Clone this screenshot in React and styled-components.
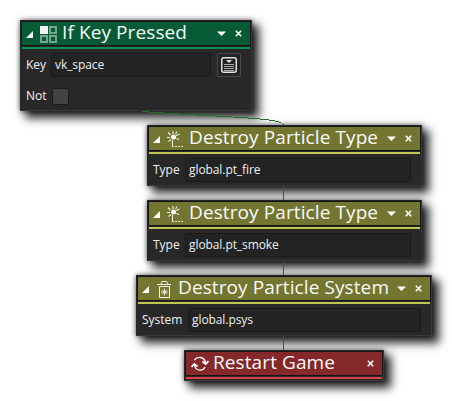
import React from "react";
import styled, { createGlobalStyle } from "styled-components";

const Global = createGlobalStyle`
  html, body { margin: 0; background: #fff; }
  * { box-sizing: border-box; }
`;

const Canvas = styled.main`
  position: relative;
  width: 452px;
  height: 401px;
  overflow: hidden;
  background: #fff;
  font-family: "Open Sans", "Noto Sans", sans-serif;
  color: #f0f0f0;
`;

const Node = styled.section`
  position: absolute;
  left: ${(p) => p.$x}px;
  top: ${(p) => p.$y}px;
  width: ${(p) => p.$w}px;
  height: ${(p) => p.$h}px;
  padding: 1px;
  background: #282828;
  border: 1px solid #383838;
  border-top-color: #262626;
  border-left-color: #262626;
  box-shadow: 6px 6px 9px 1px rgba(0, 0, 0, 0.85), 0 0 5px rgba(0, 0, 0, 0.6);
`;

const Header = styled.header`
  display: flex;
  align-items: center;
  height: 25px;
  margin: -1px -1px 0;
  border: 1px solid #151515;
  background: ${(p) => p.$color};
`;

const Stripe = styled.div`
  height: 2px;
  margin-top: 1px;
  background: ${(p) => p.$color};
`;

const Arrow = styled.svg`
  flex: none;
  width: 7px;
  height: 7px;
  margin: 2px 0 0 4px;
  fill: #fff;
`;

const Icon = styled.svg`
  flex: none;
  width: 18px;
  height: 18px;
  margin-left: ${(p) => p.$gap}px;
`;

const Title = styled.h1`
  flex: 1;
  margin: -3px 0 0 ${(p) => p.$gap}px;
  font-size: 19px;
  font-weight: 400;
  line-height: 23px;
  letter-spacing: 0.1px;
  white-space: nowrap;
  color: #fafafa;
`;

const HeaderButtons = styled.div`
  display: flex;
  align-items: center;
  gap: 9px;
  padding-right: 8px;
  svg { display: block; }
`;

const Row = styled.div`
  display: flex;
  align-items: center;
  height: 24px;
  margin-top: ${(p) => p.$top}px;
  padding: 0 9px 0 4px;
  font-size: 12px;
`;

const Label = styled.span`
  flex: none;
  width: ${(p) => p.$w}px;
  line-height: 24px;
`;

const Field = styled.div`
  flex: 1;
  height: 24px;
  padding-left: 3px;
  border: 1px solid #1a1a1a;
  border-radius: 2px;
  background: #232323;
  line-height: 22px;
  letter-spacing: -0.08px;
`;

const MenuButton = styled.div`
  display: grid;
  place-items: center;
  width: 24px;
  height: 24px;
  margin-left: 6px;
  border: 1px solid #4b4b4b;
  border-radius: 2px;
  background: #242424;
`;

const Check = styled.div`
  width: 17px;
  height: 17px;
  margin-left: 1px;
  border: 1px solid #1b1b1b;
  border-radius: 2px;
  background: #424343;
`;

const Wires = styled.svg`
  position: absolute;
  inset: 0;
  fill: none;
  stroke: #1f6f28;
  shape-rendering: crispEdges;
`;

const KeyIcon = () => (
  <Icon $gap={6} viewBox="0 0 18 18" shapeRendering="crispEdges">
    <path d="M1 1h8v8H1z" fill="#f2f2f2" />
    <path d="M11 2h6v6h-6zM2 11h6v6h-6zM11 11h6v6h-6z" fill="none" stroke="#76a58f" strokeWidth="1.5" />
  </Icon>
);

const ParticleIcon = () => (
  <Icon $gap={6} viewBox="0 0 18 18">
    <circle cx="7.5" cy="7" r="2.5" fill="#fff" />
    <path
      d="M7 1v3M1 7.5h3M10 5.5l3.5-1.5M2 2.5L4.5 5M11 1.5L9.5 4M2.5 11.5l2.5-2M10.5 8.5l2.5 1M6.5 10v6.5"
      fill="none" stroke="#f2f2e2" strokeWidth="1.1"
    />
    <path d="M6 16.5h11" stroke="#e4e4c4" strokeDasharray="2 1" />
  </Icon>
);

const TrashIcon = () => (
  <Icon $gap={6} viewBox="0 0 18 18">
    <path d="M2 4.5h14M6 4l1-2.5h4.500L13 4M4.500 6.500v11h10v-11z" fill="none" stroke="#f2f2e2" />
    <path d="M9.500 8.500v7M6 12h7M7.200 9.700l4.600 4.600M11.800 9.700l-4.600 4.600" stroke="#fff" strokeWidth=".8" />
  </Icon>
);

const RestartIcon = () => (
  <Icon $gap={5} viewBox="0 0 18 18" fill="none" stroke="#fff" strokeWidth="1.3">
    <path d="M3.500 5C6 1.500 13 1 14.500 7.500M14 12C12 16.500 4.500 16.500 3.500 10" />
    <path d="M11.500 6.500l3.200 2.500L17.500 6M.5 12L3.300 9l3.200 2.500" strokeWidth="1.7" />
  </Icon>
);

const icons = { key: KeyIcon, particle: ParticleIcon, trash: TrashIcon, restart: RestartIcon };
const themes = {
  green: ["#065a36", "#0a8f55"],
  olive: ["#737630", "#c0c552"],
  red: ["#842829", "#db4142"],
};

function ActionNode({ x, y, w, h, theme, icon, title, gap = 5, children }) {
  const [bar, stripe] = themes[theme];
  const Glyph = icons[icon];
  return (
    <Node $x={x} $y={y} $w={w} $h={h}>
      <Header $color={bar}>
        {children && <Arrow viewBox="0 0 7 7"><path d="M7 0v7H0z" /></Arrow>}
        <Glyph />
        <Title $gap={gap}>{title}</Title>
        <HeaderButtons>
          {children && (
            <svg width="9" height="5"><path d="M0 .5h9L4.5 5z" fill="#fff" /></svg>
          )}
          <svg width="7" height="7">
            <path d="M.8 .8l5.4 5.4M6.2 .8L.8 6.2" stroke="#fff" strokeWidth="1.6" />
          </svg>
        </HeaderButtons>
      </Header>
      <Stripe $color={stripe} />
      {children}
    </Node>
  );
}

export default function App() {
  return (
    <>
      <Global />
      <Canvas>
        <ActionNode x={20} y={20} w={232} h={91} theme="green" icon="key" title="If Key Pressed">
          <Row $top={4}>
            <Label $w={25}>Key</Label>
            <Field>vk_space</Field>
            <MenuButton>
              <svg width="16" height="16" viewBox="0 0 16 16" fill="none" stroke="#e2e2e2">
                <rect x=".75" y=".75" width="14.5" height="14.5" rx="2" strokeWidth="1.5" />
                <path d="M5 3h6L8 6z" fill="#e2e2e2" stroke="none" />
                <path d="M3 7.5h10M3 9.5h10M3 11.5h10M3 13.5h10" stroke="#aaa" />
              </svg>
            </MenuButton>
          </Row>
          <Row $top={7}>
            <Label $w={25}>Not</Label>
            <Check />
          </Row>
        </ActionNode>
        <ActionNode x={147} y={125} w={275} h={61} theme="olive" icon="particle" title="Destroy Particle Type">
          <Row $top={4}><Label $w={32}>Type</Label><Field>global.pt_fire</Field></Row>
        </ActionNode>
        <ActionNode x={147} y={200} w={275} h={61} theme="olive" icon="particle" title="Destroy Particle Type">
          <Row $top={4}><Label $w={32}>Type</Label><Field>global.pt_smoke</Field></Row>
        </ActionNode>
        <ActionNode x={136} y={275} w={296} h={61} theme="olive" icon="trash" title="Destroy Particle System">
          <Row $top={4}><Label $w={46}>System</Label><Field>global.psys</Field></Row>
        </ActionNode>
        <ActionNode x={184} y={350} w={200} h={31} theme="red" icon="restart" title="Restart Game" gap={4} />
        <Wires width="452" height="401">
          <path d="M142 111.5C210 117 283 117 283.5 125" />
          <path d="M283.5 186v14M283.5 261v14M283.5 336v14" />
        </Wires>
      </Canvas>
    </>
  );
}
